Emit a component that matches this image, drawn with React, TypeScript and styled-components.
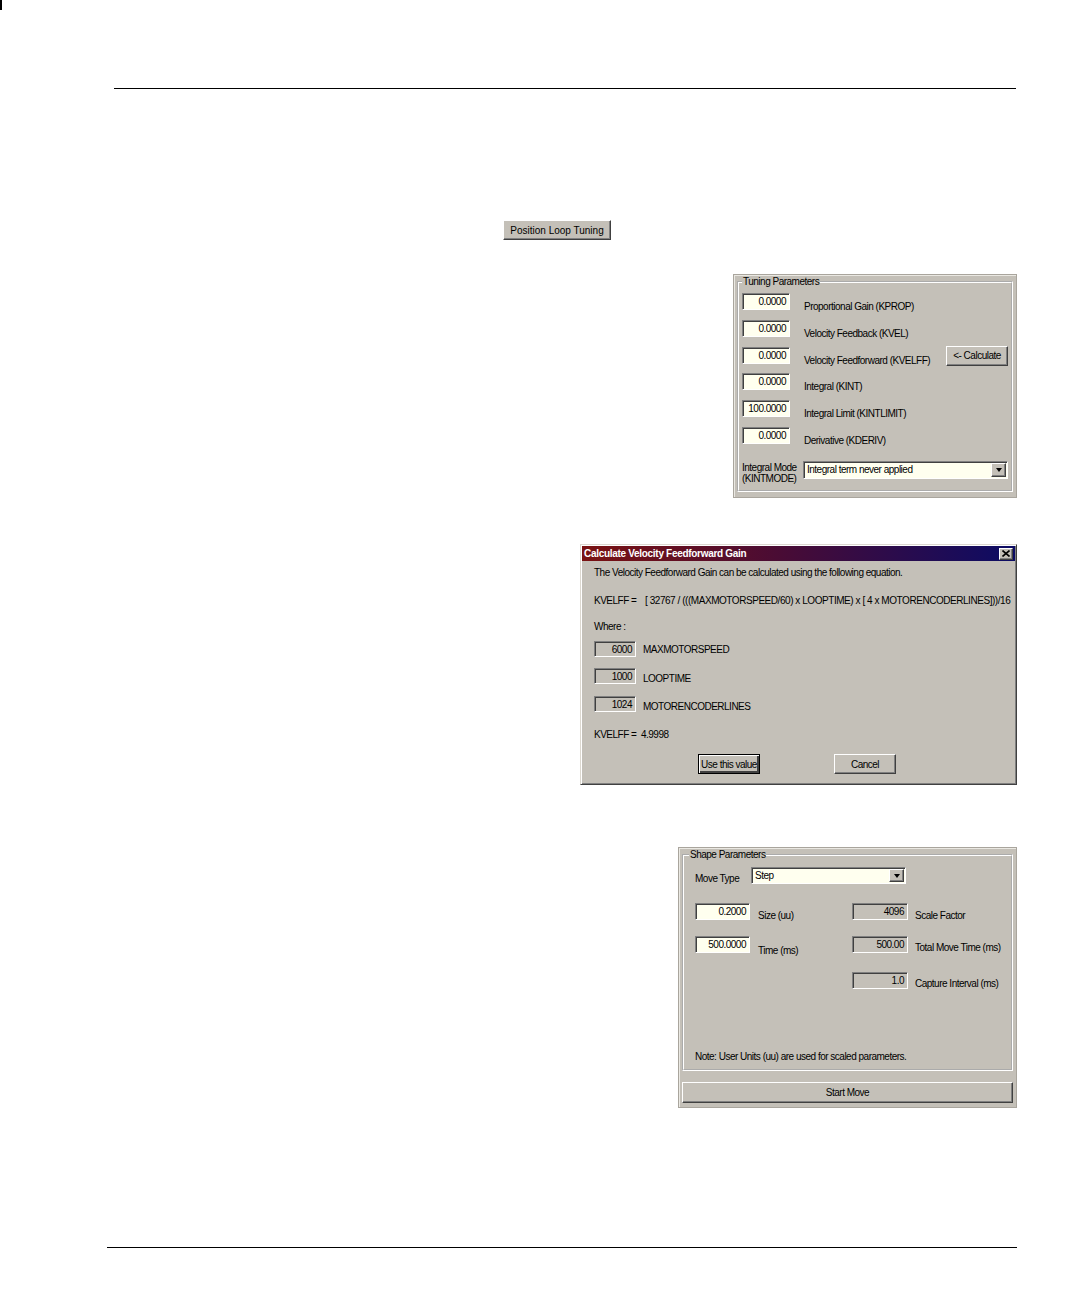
import React from 'react';
import styled, { createGlobalStyle, css } from 'styled-components';

const WIN_BG = '#c4c0b8';
const FIELD_BG = '#ffffef';

const GlobalStyle = createGlobalStyle`
  html, body {
    margin: 0;
    padding: 0;
    background: #fff;
  }
  body {
    font-family: "Liberation Sans", Arial, sans-serif;
    font-size: 10px;
    letter-spacing: -0.5px;
    color: #000;
  }
`;

const raised = css`
  border-style: solid;
  border-width: 1px;
  border-color: #fff #404040 #404040 #fff;
  box-shadow: inset -1px -1px 0 #808080;
`;

const sunken = css`
  border-style: solid;
  border-width: 1px;
  border-color: #808080 #fff #fff #808080;
  box-shadow: inset 1px 1px 0 #404040;
`;

const Page = styled.div`
  width: 1077px;
  height: 1313px;
  background: #fff;
  overflow: hidden;
  display: flex;
  flex-direction: column;
  align-items: flex-start;
`;

const CornerMark = styled.div`
  width: 2px;
  height: 10px;
  background: #000;
`;

const Rule = styled.div<{ $top: number; $left: number; $width: number }>`
  margin: ${(p) => p.$top}px 0 0 ${(p) => p.$left}px;
  width: ${(p) => p.$width}px;
  height: 1px;
  background: #000;
`;

const WinButton = styled.button<{ $width: number; $height?: number; $default?: boolean }>`
  width: ${(p) => p.$width}px;
  height: ${(p) => p.$height ?? 20}px;
  box-sizing: border-box;
  padding: 0;
  margin: 0;
  background: ${WIN_BG};
  font: inherit;
  letter-spacing: inherit;
  white-space: nowrap;
  color: #000;
  ${raised};
  ${(p) =>
    p.$default &&
    css`
      border-color: #000;
      box-shadow: inset 1px 1px 0 #fff, inset -2px -2px 0 #404040;
    `}
`;

const LaunchButton = styled(WinButton)`
  margin: 131px 0 0 503px;
  letter-spacing: 0;
`;

const TuningPanel = styled.div`
  align-self: flex-end;
  margin: 34px 60px 0 0;
  width: 284px;
  height: 224px;
  box-sizing: border-box;
  background: ${WIN_BG};
  border: 1px solid #a9a59d;
  box-shadow: inset 1px 1px 0 #eae8e2;
  padding: 0 3px;
`;

const GroupBox = styled.fieldset<{ $padLeft: number; $padTop: number }>`
  margin: 0;
  border: 2px groove #fff;
  padding: ${(p) => p.$padTop}px 3px 6px ${(p) => p.$padLeft}px;
  min-width: 0;
`;

const Legend = styled.legend<{ $shift?: number }>`
  padding: 0 1px;
  margin-left: ${(p) => p.$shift ?? 0}px;
  line-height: 13px;
`;

const ParamGrid = styled.div`
  display: grid;
  grid-template-columns: 48px 1fr auto;
  grid-auto-rows: 17px;
  row-gap: 9.8px;
  column-gap: 14px;
`;

const Field = styled.div<{ $width: number; $height?: number; $readOnly?: boolean }>`
  width: ${(p) => p.$width}px;
  height: ${(p) => p.$height ?? 17}px;
  box-sizing: border-box;
  background: ${(p) => (p.$readOnly ? WIN_BG : FIELD_BG)};
  ${sunken};
  text-align: right;
  padding: 2px 3px 0 0;
  line-height: 12px;
  white-space: nowrap;
`;

const FieldLabel = styled.div<{ $drop?: number; $indent?: number }>`
  padding-top: ${(p) => p.$drop ?? 8}px;
  padding-left: ${(p) => p.$indent ?? 0}px;
  line-height: 12px;
  white-space: nowrap;
`;

const CalcButton = styled(WinButton)`
  margin-top: -1px;
  align-self: start;
`;

const ModeRow = styled.div`
  margin-top: 17px;
  display: flex;
  align-items: flex-start;
`;

const ModeLabel = styled.div`
  width: 61px;
  line-height: 11px;
  padding-top: 1px;
  white-space: nowrap;
`;

const Select = styled.div<{ $width: number; $height: number }>`
  width: ${(p) => p.$width}px;
  height: ${(p) => p.$height}px;
  box-sizing: border-box;
  background: ${FIELD_BG};
  ${sunken};
  display: flex;
  align-items: stretch;
  padding: 1px;
`;

const SelectText = styled.div`
  flex: 1;
  padding-left: 2px;
  line-height: 13px;
  white-space: nowrap;
`;

const ArrowBox = styled.div`
  width: 15px;
  box-sizing: border-box;
  background: ${WIN_BG};
  ${raised};
  display: flex;
  align-items: center;
  justify-content: center;
`;

const ArrowGlyph = styled.div`
  width: 0;
  height: 0;
  border-left: 3.5px solid transparent;
  border-right: 3.5px solid transparent;
  border-top: 4px solid #000;
`;

const Dialog = styled.div`
  align-self: flex-end;
  margin: 46px 60px 0 0;
  width: 437px;
  height: 241px;
  box-sizing: border-box;
  background: ${WIN_BG};
  border: 1px solid;
  border-color: #dcd8d0 #404040 #404040 #dcd8d0;
  box-shadow: inset 1px 1px 0 #fff, inset -1px -1px 0 #808080;
  padding: 1px;
  display: flex;
  flex-direction: column;
`;

const TitleBar = styled.div`
  height: 15px;
  background: linear-gradient(90deg, #7a1212 0%, #4a0c34 45%, #0c0c64 100%);
  display: flex;
  align-items: center;
  justify-content: space-between;
  padding: 0 2px;
`;

const TitleText = styled.div`
  color: #fff;
  font-weight: bold;
  letter-spacing: -0.3px;
  line-height: 13px;
`;

const CloseButton = styled.div`
  width: 14px;
  height: 12px;
  box-sizing: border-box;
  background: ${WIN_BG};
  ${raised};
  display: flex;
  align-items: center;
  justify-content: center;
`;

const DialogBody = styled.div`
  padding-left: 12px;
  display: flex;
  flex-direction: column;
`;

const DialogLine = styled.div<{ $mt: number }>`
  margin-top: ${(p) => p.$mt}px;
  line-height: 12px;
  white-space: nowrap;
  display: flex;
`;

const EqLabel = styled.span`
  width: 51px;
  flex-shrink: 0;
`;

const EqText = styled.span`
  letter-spacing: -0.45px;
`;

const ValueRow = styled.div<{ $mt: number }>`
  margin-top: ${(p) => p.$mt}px;
  display: flex;
  gap: 7px;
`;

const DialogButtons = styled.div`
  margin-top: 13px;
  display: flex;
  justify-content: center;
  gap: 74px;
  padding-right: 15px;
`;

const ShapePanel = styled.div`
  align-self: flex-end;
  margin: 62px 60px 0 0;
  width: 339px;
  height: 261px;
  box-sizing: border-box;
  background: ${WIN_BG};
  border: 1px solid #a9a59d;
  box-shadow: inset 1px 1px 0 #eae8e2;
  padding: 0 3px;
  display: flex;
  flex-direction: column;
`;

const MoveRow = styled.div`
  display: flex;
  align-items: flex-start;
`;

const MoveLabel = styled.div`
  width: 56px;
  padding-top: 6px;
  line-height: 12px;
  white-space: nowrap;
`;

const ShapeRow = styled.div<{ $mt: number }>`
  margin-top: ${(p) => p.$mt}px;
  display: grid;
  grid-template-columns: 55px 102px 56px 1fr;
  height: 17px;
`;

const Note = styled.div`
  margin-top: 62px;
  line-height: 12px;
  white-space: nowrap;
`;

const StartButton = styled(WinButton)`
  margin-top: 11px;
  width: 100%;
`;

const tuningRows = [
  { value: '0.0000', label: 'Proportional Gain (KPROP)' },
  { value: '0.0000', label: 'Velocity Feedback (KVEL)' },
  { value: '0.0000', label: 'Velocity Feedforward (KVELFF)', calc: true },
  { value: '0.0000', label: 'Integral (KINT)' },
  { value: '100.0000', label: 'Integral Limit (KINTLIMIT)' },
  { value: '0.0000', label: 'Derivative (KDERIV)' },
];

const dialogValues = [
  { value: '6000', label: 'MAXMOTORSPEED', mt: 8, drop: 3 },
  { value: '1000', label: 'LOOPTIME', mt: 11, drop: 5 },
  { value: '1024', label: 'MOTORENCODERLINES', mt: 11, drop: 5 },
];

const CloseIcon = () => (
  <svg width="8" height="7" viewBox="0 0 8 7">
    <path d="M0.5 0.5 L7.5 6.5 M7.5 0.5 L0.5 6.5" stroke="#000" strokeWidth="1.6" />
  </svg>
);

const App = () => {
  return (
    <Page>
      <GlobalStyle />
      <CornerMark />
      <Rule $top={78} $left={114} $width={902} />

      <LaunchButton $width={108}>Position Loop Tuning</LaunchButton>

      <TuningPanel>
        <GroupBox $padLeft={3} $padTop={5}>
          <Legend>Tuning Parameters</Legend>
          <ParamGrid>
            {tuningRows.map((row) => (
              <React.Fragment key={row.label}>
                <Field $width={48}>{row.value}</Field>
                <FieldLabel>{row.label}</FieldLabel>
                {row.calc ? <CalcButton $width={62}>&lt;- Calculate</CalcButton> : <span />}
              </React.Fragment>
            ))}
          </ParamGrid>
          <ModeRow>
            <ModeLabel>
              Integral Mode
              <br />
              (KINTMODE)
            </ModeLabel>
            <Select $width={205} $height={18}>
              <SelectText>Integral term never applied</SelectText>
              <ArrowBox>
                <ArrowGlyph />
              </ArrowBox>
            </Select>
          </ModeRow>
        </GroupBox>
      </TuningPanel>

      <Dialog>
        <TitleBar>
          <TitleText>Calculate Velocity Feedforward Gain</TitleText>
          <CloseButton>
            <CloseIcon />
          </CloseButton>
        </TitleBar>
        <DialogBody>
          <DialogLine $mt={6}>
            The Velocity Feedforward Gain can be calculated using the following equation.
          </DialogLine>
          <DialogLine $mt={16}>
            <EqLabel>KVELFF =</EqLabel>
            <EqText>[ 32767 / (((MAXMOTORSPEED/60) x LOOPTIME) x [ 4 x MOTORENCODERLINES]))/16</EqText>
          </DialogLine>
          <DialogLine $mt={14}>Where :</DialogLine>
          {dialogValues.map((v) => (
            <ValueRow key={v.label} $mt={v.mt}>
              <Field $width={42} $height={16} $readOnly>
                {v.value}
              </Field>
              <FieldLabel $drop={v.drop}>{v.label}</FieldLabel>
            </ValueRow>
          ))}
          <DialogLine $mt={16}>KVELFF =&nbsp; 4.9998</DialogLine>
          <DialogButtons>
            <WinButton $width={62} $default>
              Use this value
            </WinButton>
            <WinButton $width={62}>Cancel</WinButton>
          </DialogButtons>
        </DialogBody>
      </Dialog>

      <ShapePanel>
        <GroupBox $padLeft={11} $padTop={6}>
          <Legend $shift={-6}>Shape Parameters</Legend>
          <MoveRow>
            <MoveLabel>Move Type</MoveLabel>
            <Select $width={155} $height={17}>
              <SelectText>Step</SelectText>
              <ArrowBox>
                <ArrowGlyph />
              </ArrowBox>
            </Select>
          </MoveRow>
          <ShapeRow $mt={18}>
            <Field $width={55}>0.2000</Field>
            <FieldLabel $indent={8} $drop={7}>Size (uu)</FieldLabel>
            <Field $width={56} $readOnly>
              4096
            </Field>
            <FieldLabel $indent={7} $drop={7}>Scale Factor</FieldLabel>
          </ShapeRow>
          <ShapeRow $mt={16}>
            <Field $width={55}>500.0000</Field>
            <FieldLabel $indent={8} $drop={9}>
              Time (ms)
            </FieldLabel>
            <Field $width={56} $readOnly>
              500.00
            </Field>
            <FieldLabel $indent={7} $drop={6}>
              Total Move Time (ms)
            </FieldLabel>
          </ShapeRow>
          <ShapeRow $mt={19}>
            <span />
            <span />
            <Field $width={56} $readOnly>
              1.0
            </Field>
            <FieldLabel $indent={7} $drop={6}>
              Capture Interval (ms)
            </FieldLabel>
          </ShapeRow>
          <Note>Note: User Units (uu) are used for scaled parameters.</Note>
        </GroupBox>
        <StartButton $width={331} $height={21}>
          Start Move
        </StartButton>
      </ShapePanel>

      <Rule $top={139} $left={107} $width={910} />
    </Page>
  );
};

export default App;
